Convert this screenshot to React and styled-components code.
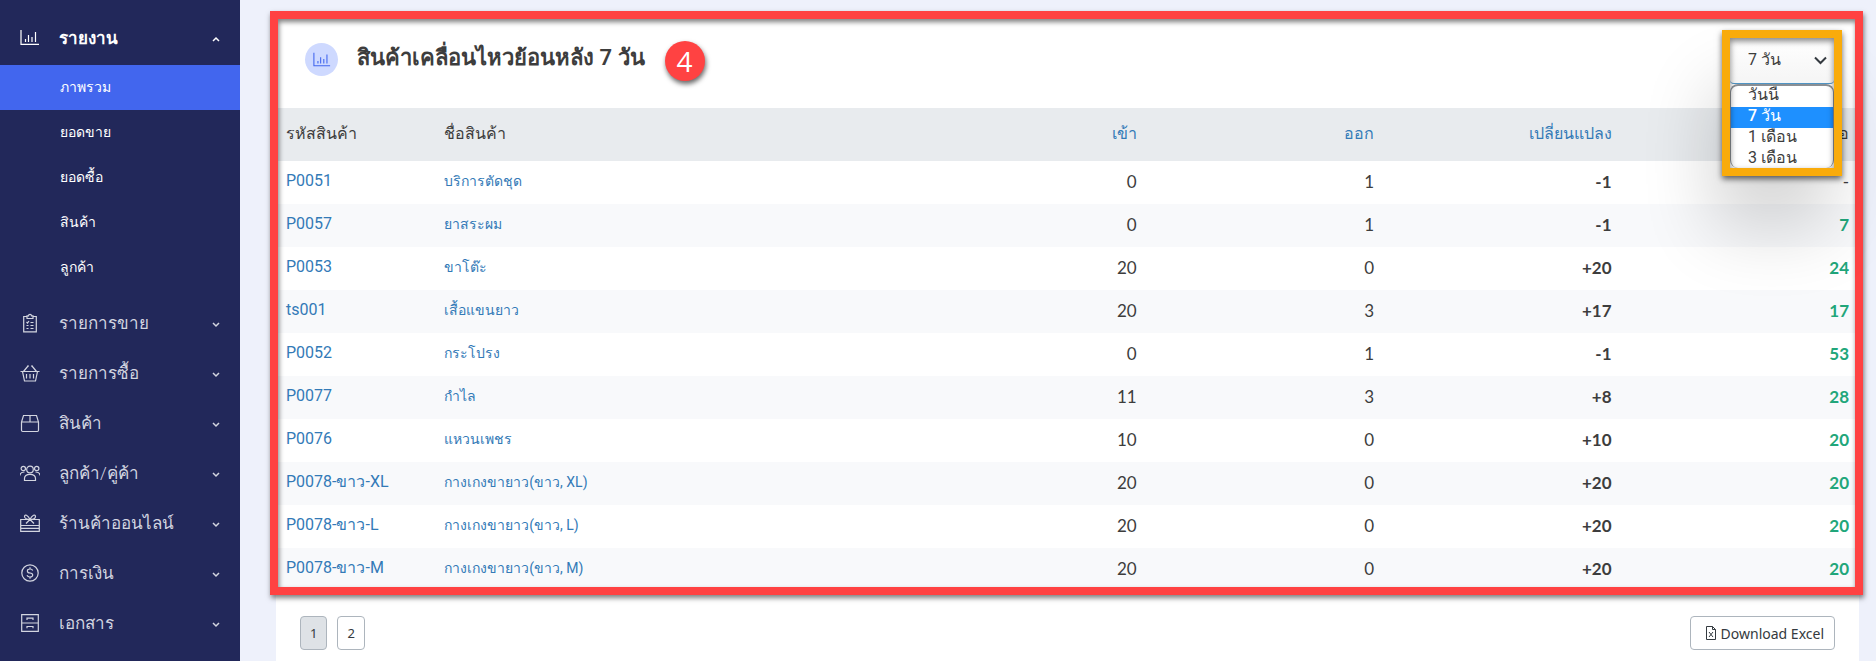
import { useState } from 'react'
import styled, { createGlobalStyle, css } from 'styled-components'

const GlobalStyle = createGlobalStyle`
  * {
    box-sizing: border-box;
  }
  body {
    margin: 0;
    background-color: #eef1fb;
    color: #3d3d3d;
    font-family: Roboto, 'Noto Sans', sans-serif;
    font-size: 16px;
  }
  a {
    text-decoration: none;
  }
`

const Page = styled.div`
  display: flex;
  min-height: 100vh;
`

const Sidebar = styled.nav`
  flex: 0 0 240px;
  background-color: #22285a;
  padding-top: 13px;
`
const MenuButton = styled.button`
  display: flex;
  align-items: center;
  width: 100%;
  height: 50px;
  padding: 0 20px;
  border: 0;
  background: none;
  color: ${({ $open }) => ($open ? '#ffffff' : '#d3d5e0')};
  font-family: inherit;
  font-size: 17px;
  font-weight: ${({ $open }) => ($open ? 600 : 300)};
  text-align: left;
  cursor: pointer;
`
const MenuIcon = styled.svg`
  width: 20px;
  height: 20px;
  margin-right: 19px;
  fill: none;
  stroke: currentColor;
  stroke-width: 1.2;
`
const MenuLabel = styled.span`
  flex: 1;
  padding-bottom: 2px;
`
const MenuChevron = styled.svg`
  width: 8px;
  height: 12px;
  fill: none;
  stroke: currentColor;
  stroke-width: 1.5;
`
const SubMenu = styled.ul`
  margin: 2px 0 8px;
  padding: 0;
  list-style: none;
`
const SubMenuLink = styled.a`
  display: flex;
  align-items: center;
  height: 45px;
  padding: 0 20px 2px 60px;
  background-color: ${({ $active }) => ($active ? '#4266ee' : 'transparent')};
  color: #ffffff;
  font-size: 14px;
  font-weight: 500;
`

const Main = styled.main`
  flex: 1;
  min-width: 0;
  display: flex;
  padding: 17px 17px 0 36px;
`
const Card = styled.section`
  flex: 1;
  min-width: 0;
  background-color: #ffffff;
`
const Report = styled.div`
  position: relative;

  &::after {
    content: '';
    position: absolute;
    inset: -6px -4px -4px -6px;
    border: 8px solid #ff4242;
    box-shadow: 1px 3px 5px rgba(0, 0, 0, 0.5), inset 1px 3px 5px rgba(0, 0, 0, 0.5);
    pointer-events: none;
  }
`
const CardHeader = styled.header`
  display: flex;
  align-items: flex-start;
  height: 91px;
  padding: 24px 29px 0;
`
const HeaderIcon = styled.span`
  display: flex;
  align-items: center;
  justify-content: center;
  width: 33px;
  height: 33px;
  margin: 2px 19px 0 0;
  border-radius: 50%;
  background-color: #ced9ff;
  color: #4266ee;
`
const ChartDrawing = styled.svg`
  width: 18px;
  height: 18px;
  fill: none;
  stroke: currentColor;
  stroke-width: 1.2;
`
const Title = styled.h1`
  margin: 0;
  font-size: 22px;
  line-height: 34px;
  font-weight: 600;
`
const StepBadge = styled.span`
  width: 40px;
  height: 40px;
  margin-left: 20px;
  border-radius: 50%;
  background-color: #ff4242;
  box-shadow: 1px 3px 5px rgba(0, 0, 0, 0.6);
  color: #ffffff;
  font-family: 'Open Sans', sans-serif;
  font-size: 28px;
  font-weight: 500;
  line-height: 40px;
  text-align: center;
`

const PeriodPicker = styled.div`
  position: absolute;
  top: 13px;
  right: 17px;
  z-index: 1;
  width: 120px;
  height: 146px;
  border: 8px solid #f9ab0b;
  background-color: #ffffff;
  box-shadow: 0 3px 6px rgba(0, 0, 0, 0.6), -10px 55px 70px rgba(0, 0, 0, 0.16);

  &::after {
    content: '';
    position: absolute;
    inset: 0;
    box-shadow: inset 0 3px 6px rgba(0, 0, 0, 0.5);
    pointer-events: none;
  }
`
const PeriodField = styled.div`
  position: relative;
`
const PeriodSelect = styled.select`
  display: block;
  width: 100%;
  height: 46px;
  padding: 0 18px 2px;
  border: 0;
  border-bottom: 1px solid #4f94c4;
  border-radius: 0 0 4px 4px;
  appearance: none;
  background: linear-gradient(#ffffff, #f5f5f5);
  color: #3d3d3d;
  font-family: inherit;
  font-size: 16px;
`
const PeriodArrow = styled.svg`
  position: absolute;
  top: 18px;
  right: 7px;
  width: 13px;
  height: 9px;
  fill: none;
  stroke: #343a40;
  stroke-width: 2;
  pointer-events: none;
`
const PeriodList = styled.ul`
  height: 84px;
  margin: 0;
  padding: 0;
  border: 1px solid #8a8f94;
  border-top-width: 2px;
  border-bottom: 0;
  border-radius: 8px;
  list-style: none;
  overflow: hidden;
`
const PeriodOption = styled.li`
  height: 21px;
  padding-left: 17px;
  font-size: 16px;
  line-height: 18px;
  cursor: pointer;
  ${({ $selected }) =>
    $selected &&
    css`
      background-color: #1e90ff;
      color: #ffffff;
      font-weight: 500;
    `}
`

const ProductTable = styled.table`
  width: 100%;
  table-layout: fixed;
  border-collapse: collapse;
`
const HeadCell = styled.th`
  width: ${({ $width }) => $width};
  height: 53px;
  padding: 0 10px 2px;
  background-color: #e8ebee;
  font-size: 16px;
  font-weight: 500;
  text-align: ${({ $numeric }) => ($numeric ? 'right' : 'left')};
`
const TextLink = styled.a`
  color: #337ab7;
`
const ProductRow = styled.tr`
  &:nth-child(even) {
    background-color: #f8f9fb;
  }
`
const TextCell = styled.td`
  height: 43px;
  padding: 0 10px 4px;
  font-size: ${({ $small }) => ($small ? '14px' : '16px')};
  white-space: nowrap;
`
const NumberCell = styled.td`
  height: 43px;
  padding: 0 10px 2px;
  font-family: Lato, sans-serif;
  font-size: 17px;
  font-weight: ${({ $bold }) => ($bold ? 700 : 400)};
  color: ${({ $stock }) => ($stock ? '#21a67a' : 'inherit')};
  text-align: right;
`

const CardFooter = styled.footer`
  display: flex;
  gap: 10px;
  padding: 25px 24px 10px;
`
const OutlineButton = styled.button`
  display: flex;
  align-items: center;
  gap: 4px;
  height: 34px;
  padding: 0 ${({ $wide }) => ($wide ? '10px 0 14px' : '9px')};
  margin-left: ${({ $wide }) => ($wide ? 'auto' : '0')};
  border: 1px solid #adb5bd;
  border-radius: 4px;
  background-color: ${({ $active }) => ($active ? '#dee2e6' : '#ffffff')};
  color: #343a40;
  font-family: 'Noto Sans', sans-serif;
  font-size: ${({ $wide }) => ($wide ? '14px' : '13px')};
  cursor: pointer;
`
const FileDrawing = styled.svg`
  width: 12px;
  height: 14px;
  fill: none;
  stroke: currentColor;
`

const ChartPaths = () => <path d="M1 2v14.400h18M5.500 14v-3M8.500 14V7M12 14V9M15.500 14V4" />

const menuDrawings = {
  orders: (
    <>
      <path d="M7 3.500H3.700v15.300h12.600V3.500H13M7 2.800h1.500a1.500 1.500 0 0 1 3 0H13v2.700H7z" />
      <path d="M6.500 9l1 1 1.500-2M10.500 9.500h3M6.500 12.500h2M10.500 12.500h3M6.500 15.500h2M10.500 15.500h3" />
    </>
  ),
  basket: (
    <path d="M.5 8.500h19M2.500 8.500l2 9.500h11l2-9.500M3.500 8.500L8 3M16.500 8.500L12 3M7 3h2M11 3h2M6.500 11v4.500M10 11v4.500M13.500 11v4.500" />
  ),
  box: <path d="M1.500 9v8.300c0 .700.500 1.200 1.200 1.200h14.600c.700 0 1.200-.5 1.200-1.200V9l-2-6.500h-13zM1.500 9h17M10 2.500V9" />,
  people: (
    <>
      <circle cx="10" cy="6.500" r="3.300" />
      <circle cx="3.300" cy="5.500" r="2.200" />
      <circle cx="16.700" cy="5.500" r="2.200" />
      <path d="M4.500 17.500v-2c0-2.500 2-4.200 5.500-4.200s5.500 1.700 5.500 4.200v2zM0 12.500c0-2.500 1.300-3.500 4.500-3.500M20 12.500c0-2.500-1.300-3.500-4.500-3.500" />
    </>
  ),
  gift: (
    <>
      <path d="M.7 6.500h18.600v11.800H.7zM.7 12.500h18.600M.7 15.400h18.600" />
      <path d="M10 6.500C8 2 4.500.8 4.500 3.500c0 2 3 3 5.500 3 2.500 0 5.500-1 5.500-3 0-2.700-3.500-1.500-5.500 3zM10 6.500l-4 4M10 6.500l4 4" />
    </>
  ),
  money: (
    <>
      <circle cx="10" cy="10" r="8.200" />
      <path d="M12.700 7.500c-.4-1-1.400-1.500-2.700-1.500-3.500 0-3.500 3.700 0 4s3.700 4-.100 4c-1.500 0-2.500-.700-2.900-1.700M10 4.300V6M10 14v1.700" />
    </>
  ),
  drawers: (
    <path d="M1.700 1.700h16.600v16.600H1.700zM1.700 10h16.600M7 7V5.200h6V7M7 15.300v-1.800h6v1.800" />
  ),
}

const subMenu = ['ภาพรวม', 'ยอดขาย', 'ยอดซื้อ', 'สินค้า', 'ลูกค้า']

const menu = [
  { icon: 'orders', label: 'รายการขาย' },
  { icon: 'basket', label: 'รายการซื้อ' },
  { icon: 'box', label: 'สินค้า' },
  { icon: 'people', label: 'ลูกค้า/คู่ค้า' },
  { icon: 'gift', label: 'ร้านค้าออนไลน์' },
  { icon: 'money', label: 'การเงิน' },
  { icon: 'drawers', label: 'เอกสาร' },
]

const periods = ['วันนี้', '7 วัน', '1 เดือน', '3 เดือน']

const products = [
  { code: 'P0051', name: 'บริการตัดชุด', stockIn: 0, stockOut: 1, change: '-1', left: '-' },
  { code: 'P0057', name: 'ยาสระผม', stockIn: 0, stockOut: 1, change: '-1', left: '7' },
  { code: 'P0053', name: 'ขาโต๊ะ', stockIn: 20, stockOut: 0, change: '+20', left: '24' },
  { code: 'ts001', name: 'เสื้อแขนยาว', stockIn: 20, stockOut: 3, change: '+17', left: '17' },
  { code: 'P0052', name: 'กระโปรง', stockIn: 0, stockOut: 1, change: '-1', left: '53' },
  { code: 'P0077', name: 'กำไล', stockIn: 11, stockOut: 3, change: '+8', left: '28' },
  { code: 'P0076', name: 'แหวนเพชร', stockIn: 10, stockOut: 0, change: '+10', left: '20' },
  { code: 'P0078-ขาว-XL', name: 'กางเกงขายาว(ขาว, XL)', stockIn: 20, stockOut: 0, change: '+20', left: '20' },
  { code: 'P0078-ขาว-L', name: 'กางเกงขายาว(ขาว, L)', stockIn: 20, stockOut: 0, change: '+20', left: '20' },
  { code: 'P0078-ขาว-M', name: 'กางเกงขายาว(ขาว, M)', stockIn: 20, stockOut: 0, change: '+20', left: '20' },
]

function MenuItem({ label, open, children }) {
  return (
    <MenuButton type="button" aria-expanded={Boolean(open)} $open={open}>
      <MenuIcon viewBox="0 0 20 20" aria-hidden="true">{children}</MenuIcon>
      <MenuLabel>{label}</MenuLabel>
      <MenuChevron viewBox="0 0 8 12" aria-hidden="true">
        <path d={open ? 'M1 9l3-3 3 3' : 'M1 6l3 3 3-3'} />
      </MenuChevron>
    </MenuButton>
  )
}

function PeriodMenu({ value, onChange }) {
  return (
    <PeriodPicker>
      <PeriodField>
        <PeriodSelect aria-label="ช่วงเวลา" value={value} onChange={(e) => onChange(e.target.value)}>
          {periods.map((period) => (
            <option key={period}>{period}</option>
          ))}
        </PeriodSelect>
        <PeriodArrow viewBox="0 0 13 9" aria-hidden="true">
          <path d="M1 1.500l5.500 5.500L12 1.500" />
        </PeriodArrow>
      </PeriodField>
      <PeriodList role="listbox" aria-label="ช่วงเวลา">
        {periods.map((period) => (
          <PeriodOption
            key={period}
            role="option"
            aria-selected={period === value}
            $selected={period === value}
            onClick={() => onChange(period)}
          >
            {period}
          </PeriodOption>
        ))}
      </PeriodList>
    </PeriodPicker>
  )
}

function ProductMovement() {
  return (
    <ProductTable>
      <thead>
        <tr>
          <HeadCell $width="10%">รหัสสินค้า</HeadCell>
          <HeadCell $width="30%">ชื่อสินค้า</HeadCell>
          <HeadCell $width="15%" $numeric><TextLink href="#in">เข้า</TextLink></HeadCell>
          <HeadCell $width="15%" $numeric><TextLink href="#out">ออก</TextLink></HeadCell>
          <HeadCell $width="15%" $numeric><TextLink href="#change">เปลี่ยนแปลง</TextLink></HeadCell>
          <HeadCell $width="15%" $numeric>คงเหลือ</HeadCell>
        </tr>
      </thead>
      <tbody>
        {products.map(({ code, name, stockIn, stockOut, change, left }) => (
          <ProductRow key={code}>
            <TextCell><TextLink href={`#${code}`}>{code}</TextLink></TextCell>
            <TextCell $small><TextLink href={`#${code}`}>{name}</TextLink></TextCell>
            <NumberCell>{stockIn}</NumberCell>
            <NumberCell>{stockOut}</NumberCell>
            <NumberCell $bold>{change}</NumberCell>
            <NumberCell $bold={left !== '-'} $stock={left !== '-'}>{left}</NumberCell>
          </ProductRow>
        ))}
      </tbody>
    </ProductTable>
  )
}

function App() {
  const [period, setPeriod] = useState('7 วัน')
  const [page, setPage] = useState(1)

  return (
    <Page>
      <GlobalStyle />
      <Sidebar>
        <MenuItem label="รายงาน" open>
          <ChartPaths />
        </MenuItem>
        <SubMenu>
          {subMenu.map((label, index) => (
            <li key={label}>
              <SubMenuLink href="#report" $active={index === 0}>{label}</SubMenuLink>
            </li>
          ))}
        </SubMenu>
        {menu.map(({ icon, label }) => (
          <MenuItem key={icon} label={label}>{menuDrawings[icon]}</MenuItem>
        ))}
      </Sidebar>
      <Main>
        <Card>
          <Report>
            <CardHeader>
              <HeaderIcon>
                <ChartDrawing viewBox="0 0 20 20" aria-hidden="true">
                  <ChartPaths />
                </ChartDrawing>
              </HeaderIcon>
              <Title>สินค้าเคลื่อนไหวย้อนหลัง {period}</Title>
              <StepBadge>4</StepBadge>
            </CardHeader>
            <ProductMovement />
            <PeriodMenu value={period} onChange={setPeriod} />
          </Report>
          <CardFooter>
            <OutlineButton type="button" $active={page === 1} onClick={() => setPage(1)}>1</OutlineButton>
            <OutlineButton type="button" $active={page === 2} onClick={() => setPage(2)}>2</OutlineButton>
            <OutlineButton type="button" $wide>
              <FileDrawing viewBox="0 0 12 14" aria-hidden="true">
                <path d="M1.500.5h6l3 3v10h-9zM7.500.5v3h3M4 6l4 5M8 6l-4 5" />
              </FileDrawing>
              Download Excel
            </OutlineButton>
          </CardFooter>
        </Card>
      </Main>
    </Page>
  )
}

export default App
